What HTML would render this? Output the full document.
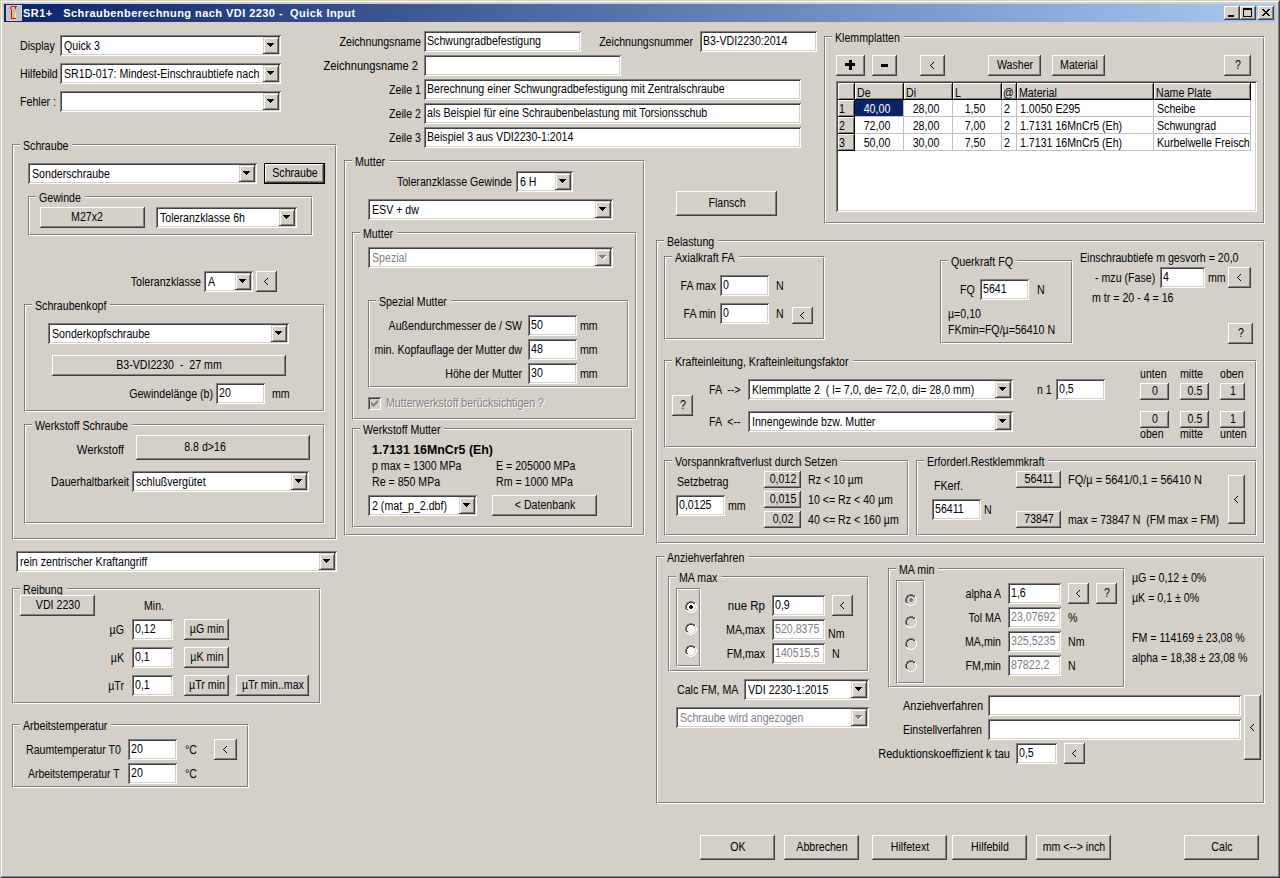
<!DOCTYPE html><html><head><meta charset="utf-8"><title>SR1+</title><style>
*{margin:0;padding:0}
html,body{width:1280px;height:878px;overflow:hidden;background:#D4D0C8}
body{position:relative;font-family:"Liberation Sans",sans-serif;font-size:12px;line-height:14px;color:#000}
div{position:absolute;box-sizing:border-box}
.t{white-space:pre;height:14px}
.clip{overflow:hidden}
.e{background:#fff;box-shadow:inset 1px 1px #808080,inset -1px -1px #fff,inset 2px 2px #404040,inset -2px -2px #D4D0C8;overflow:hidden}
.b{background:#D4D0C8;box-shadow:inset -1px -1px #404040,inset 1px 1px #fff,inset -2px -2px #808080;overflow:hidden}
.bd{background:#D4D0C8;border:1px solid #000;box-shadow:inset -1px -1px #404040,inset 1px 1px #fff,inset -2px -2px #808080;overflow:hidden}
.bd>.t{margin-left:-1px;margin-top:-1px}
.cb{background:#D4D0C8;box-shadow:inset -1px -1px #404040,inset 1px 1px #D4D0C8,inset 2px 2px #fff,inset -2px -2px #808080}
.arr{width:0;height:0;border-left:3.5px solid transparent;border-right:3.5px solid transparent;border-top:4px solid #000}
.g1{border:1px solid;border-color:#808080 #fff #fff #808080}
.g2{border:1px solid;border-color:#fff #808080 #808080 #fff}
.gt{background:#D4D0C8}
.rd{width:12px;height:12px;border-radius:6px;box-shadow:inset 1px 1px #808080,inset -1px -1px #fff,inset 2px 2px #404040,inset -2px -2px #D4D0C8}
.ck{width:13px;height:13px;box-shadow:inset 1px 1px #808080,inset -1px -1px #fff,inset 2px 2px #404040,inset -2px -2px #D4D0C8}
</style></head><body><div style="left:0;top:0;width:1280px;height:878px;border-top:1px solid #D4D0C8;border-left:1px solid #D4D0C8;border-right:1px solid #404040;border-bottom:1px solid #404040"></div>
<div style="left:1px;top:1px;width:1278px;height:876px;border-top:1px solid #fff;border-left:1px solid #fff;border-right:1px solid #808080;border-bottom:1px solid #808080"></div>
<div style="left:4px;top:4px;width:1272px;height:18px;background:linear-gradient(to right,#0A246A,#A6CAF0)"></div>
<div style="left:6px;top:5px;width:16px;height:16px"><svg width="16" height="16" style="position:absolute;left:0;top:0" shape-rendering="crispEdges"><rect x="0" y="0" width="16" height="16" fill="#D8D4CC"/><rect x="1" y="1" width="14" height="14" fill="#C0C0C0"/><rect x="5" y="1" width="6" height="1" fill="#f00"/><rect x="4" y="2" width="1" height="2" fill="#f00"/><rect x="9" y="2" width="1" height="2" fill="#f00"/><rect x="5" y="4" width="1" height="10" fill="#f00"/><rect x="5" y="13" width="5" height="1" fill="#f00"/><rect x="9" y="7" width="1" height="6" fill="#ff0"/></svg></div>
<div class="t" style="top:6px;left:23px;transform-origin:0 0;color:#fff;font-weight:bold;font-size:11px;letter-spacing:0.45px;">SR1+   Schraubenberechnung nach VDI 2230 -  Quick Input</div>
<div class="b" style="left:1224px;top:6px;width:16px;height:14px"><div style="left:4px;top:9px;width:6px;height:2px;background:#000"></div></div>
<div class="b" style="left:1240px;top:6px;width:16px;height:14px"><div style="left:3px;top:2px;width:9px;height:9px;border:1px solid #000;border-top-width:2px"></div></div>
<div class="b" style="left:1258px;top:6px;width:16px;height:14px"><svg width="16" height="14" style="position:absolute;left:0;top:0" shape-rendering="crispEdges"><rect x="4" y="3" width="1" height="1"/><rect x="5" y="3" width="1" height="1"/><rect x="10" y="3" width="1" height="1"/><rect x="11" y="3" width="1" height="1"/><rect x="5" y="4" width="1" height="1"/><rect x="6" y="4" width="1" height="1"/><rect x="9" y="4" width="1" height="1"/><rect x="10" y="4" width="1" height="1"/><rect x="6" y="5" width="1" height="1"/><rect x="7" y="5" width="1" height="1"/><rect x="8" y="5" width="1" height="1"/><rect x="9" y="5" width="1" height="1"/><rect x="7" y="6" width="1" height="1"/><rect x="8" y="6" width="1" height="1"/><rect x="6" y="7" width="1" height="1"/><rect x="7" y="7" width="1" height="1"/><rect x="8" y="7" width="1" height="1"/><rect x="9" y="7" width="1" height="1"/><rect x="5" y="8" width="1" height="1"/><rect x="6" y="8" width="1" height="1"/><rect x="9" y="8" width="1" height="1"/><rect x="10" y="8" width="1" height="1"/><rect x="4" y="9" width="1" height="1"/><rect x="5" y="9" width="1" height="1"/><rect x="10" y="9" width="1" height="1"/><rect x="11" y="9" width="1" height="1"/></svg></div>
<div class="t" style="top:39px;left:20px;transform-origin:0 0;transform:scaleX(0.885);">Display</div>
<div class="e" style="left:60px;top:35px;width:221px;height:21px;"><div class="clip" style="left:2px;top:2px;width:201px;height:17px"><div class="t" style="top:2px;left:2px;transform-origin:0 0;transform:scaleX(0.885);">Quick 3</div></div><div class="cb" style="left:203px;top:2px;width:16px;height:17px"><div style="left:4px;top:6px;width:7px;height:4px"><div style="left:0px;top:0px;width:7px;height:1px;background:#000"></div><div style="left:1px;top:1px;width:5px;height:1px;background:#000"></div><div style="left:2px;top:2px;width:3px;height:1px;background:#000"></div><div style="left:3px;top:3px;width:1px;height:1px;background:#000"></div></div></div></div>
<div class="t" style="top:67px;left:20px;transform-origin:0 0;transform:scaleX(0.885);">Hilfebild</div>
<div class="e" style="left:60px;top:63px;width:221px;height:21px;"><div class="clip" style="left:2px;top:2px;width:201px;height:17px"><div class="t" style="top:2px;left:2px;transform-origin:0 0;transform:scaleX(0.885);">SR1D-017: Mindest-Einschraubtiefe nach</div></div><div class="cb" style="left:203px;top:2px;width:16px;height:17px"><div style="left:4px;top:6px;width:7px;height:4px"><div style="left:0px;top:0px;width:7px;height:1px;background:#000"></div><div style="left:1px;top:1px;width:5px;height:1px;background:#000"></div><div style="left:2px;top:2px;width:3px;height:1px;background:#000"></div><div style="left:3px;top:3px;width:1px;height:1px;background:#000"></div></div></div></div>
<div class="t" style="top:95px;left:20px;transform-origin:0 0;transform:scaleX(0.885);">Fehler :</div>
<div class="e" style="left:60px;top:91px;width:221px;height:21px;"><div class="cb" style="left:203px;top:2px;width:16px;height:17px"><div style="left:4px;top:6px;width:7px;height:4px"><div style="left:0px;top:0px;width:7px;height:1px;background:#000"></div><div style="left:1px;top:1px;width:5px;height:1px;background:#000"></div><div style="left:2px;top:2px;width:3px;height:1px;background:#000"></div><div style="left:3px;top:3px;width:1px;height:1px;background:#000"></div></div></div></div>
<div class="g1" style="left:12px;top:144px;width:325px;height:396px"></div>
<div class="g2" style="left:13px;top:145px;width:323px;height:394px"></div>
<div class="gt" style="left:20px;top:141px;width:52px;height:9px"></div>
<div class="t" style="top:139px;left:23px;transform-origin:0 0;transform:scaleX(0.885);">Schraube</div>
<div class="e" style="left:28px;top:163px;width:229px;height:21px;"><div class="clip" style="left:2px;top:2px;width:209px;height:17px"><div class="t" style="top:2px;left:2px;transform-origin:0 0;transform:scaleX(0.885);">Sonderschraube</div></div><div class="cb" style="left:211px;top:2px;width:16px;height:17px"><div style="left:4px;top:6px;width:7px;height:4px"><div style="left:0px;top:0px;width:7px;height:1px;background:#000"></div><div style="left:1px;top:1px;width:5px;height:1px;background:#000"></div><div style="left:2px;top:2px;width:3px;height:1px;background:#000"></div><div style="left:3px;top:3px;width:1px;height:1px;background:#000"></div></div></div></div>
<div class="bd" style="left:264px;top:163px;width:61px;height:21px;"><div class="t" style="top:3px;left:-269.5px;width:600px;text-align:center;transform-origin:50% 0;transform:scaleX(0.885);">Schraube</div></div>
<div class="g1" style="left:28px;top:196px;width:285px;height:40px"></div>
<div class="g2" style="left:29px;top:197px;width:283px;height:38px"></div>
<div class="gt" style="left:36px;top:193px;width:49px;height:9px"></div>
<div class="t" style="top:191px;left:39px;transform-origin:0 0;transform:scaleX(0.885);">Gewinde</div>
<div class="b" style="left:40px;top:207px;width:105px;height:21px;"><div class="t" style="top:3px;left:-253.5px;width:600px;text-align:center;transform-origin:50% 0;transform:scaleX(0.885);">M27x2</div></div>
<div class="e" style="left:156px;top:207px;width:141px;height:21px;"><div class="clip" style="left:2px;top:2px;width:121px;height:17px"><div class="t" style="top:2px;left:2px;transform-origin:0 0;transform:scaleX(0.885);">Toleranzklasse 6h</div></div><div class="cb" style="left:123px;top:2px;width:16px;height:17px"><div style="left:4px;top:6px;width:7px;height:4px"><div style="left:0px;top:0px;width:7px;height:1px;background:#000"></div><div style="left:1px;top:1px;width:5px;height:1px;background:#000"></div><div style="left:2px;top:2px;width:3px;height:1px;background:#000"></div><div style="left:3px;top:3px;width:1px;height:1px;background:#000"></div></div></div></div>
<div class="t" style="top:275px;left:-399px;width:600px;text-align:right;transform-origin:100% 0;transform:scaleX(0.885);">Toleranzklasse</div>
<div class="e" style="left:204px;top:271px;width:49px;height:21px;"><div class="clip" style="left:2px;top:2px;width:29px;height:17px"><div class="t" style="top:2px;left:2px;transform-origin:0 0;transform:scaleX(0.885);">A</div></div><div class="cb" style="left:31px;top:2px;width:16px;height:17px"><div style="left:4px;top:6px;width:7px;height:4px"><div style="left:0px;top:0px;width:7px;height:1px;background:#000"></div><div style="left:1px;top:1px;width:5px;height:1px;background:#000"></div><div style="left:2px;top:2px;width:3px;height:1px;background:#000"></div><div style="left:3px;top:3px;width:1px;height:1px;background:#000"></div></div></div></div>
<div class="b" style="left:256px;top:271px;width:21px;height:21px;"><svg style="position:absolute;left:8px;top:7px" width="4" height="7" shape-rendering="crispEdges"><rect x="3" y="0" width="1" height="1"/><rect x="2" y="1" width="1" height="1"/><rect x="1" y="2" width="1" height="1"/><rect x="0" y="3" width="1" height="1"/><rect x="1" y="4" width="1" height="1"/><rect x="2" y="5" width="1" height="1"/><rect x="3" y="6" width="1" height="1"/></svg></div>
<div class="g1" style="left:24px;top:304px;width:301px;height:108px"></div>
<div class="g2" style="left:25px;top:305px;width:299px;height:106px"></div>
<div class="gt" style="left:32px;top:301px;width:78px;height:9px"></div>
<div class="t" style="top:299px;left:35px;transform-origin:0 0;transform:scaleX(0.885);">Schraubenkopf</div>
<div class="e" style="left:48px;top:323px;width:241px;height:21px;"><div class="clip" style="left:2px;top:2px;width:221px;height:17px"><div class="t" style="top:2px;left:2px;transform-origin:0 0;transform:scaleX(0.885);">Sonderkopfschraube</div></div><div class="cb" style="left:223px;top:2px;width:16px;height:17px"><div style="left:4px;top:6px;width:7px;height:4px"><div style="left:0px;top:0px;width:7px;height:1px;background:#000"></div><div style="left:1px;top:1px;width:5px;height:1px;background:#000"></div><div style="left:2px;top:2px;width:3px;height:1px;background:#000"></div><div style="left:3px;top:3px;width:1px;height:1px;background:#000"></div></div></div></div>
<div class="b" style="left:52px;top:355px;width:234px;height:21px;"><div class="t" style="top:3px;left:-183.0px;width:600px;text-align:center;transform-origin:50% 0;transform:scaleX(0.885);">B3-VDI2230  -  27 mm</div></div>
<div class="t" style="top:387px;left:-387px;width:600px;text-align:right;transform-origin:100% 0;transform:scaleX(0.885);">Gewindelänge (b)</div>
<div class="e" style="left:216px;top:383px;width:49px;height:21px;"><div class="t" style="top:3px;left:3px;transform-origin:0 0;transform:scaleX(0.885);">20</div></div>
<div class="t" style="top:387px;left:272px;transform-origin:0 0;transform:scaleX(0.885);">mm</div>
<div class="g1" style="left:24px;top:424px;width:301px;height:100px"></div>
<div class="g2" style="left:25px;top:425px;width:299px;height:98px"></div>
<div class="gt" style="left:32px;top:421px;width:100px;height:9px"></div>
<div class="t" style="top:419px;left:35px;transform-origin:0 0;transform:scaleX(0.885);">Werkstoff Schraube</div>
<div class="t" style="top:443px;left:-476px;width:600px;text-align:right;transform-origin:100% 0;transform:scaleX(0.94);">Werkstoff</div>
<div class="b" style="left:136px;top:435px;width:174px;height:25px;"><div class="t" style="top:5px;left:-231.0px;width:600px;text-align:center;transform-origin:50% 0;transform:scaleX(0.885);">8.8 d&gt;16</div></div>
<div class="t" style="top:475px;left:-471px;width:600px;text-align:right;transform-origin:100% 0;transform:scaleX(0.885);">Dauerhaltbarkeit</div>
<div class="e" style="left:132px;top:471px;width:177px;height:21px;"><div class="clip" style="left:2px;top:2px;width:157px;height:17px"><div class="t" style="top:2px;left:2px;transform-origin:0 0;transform:scaleX(0.885);">schlußvergütet</div></div><div class="cb" style="left:159px;top:2px;width:16px;height:17px"><div style="left:4px;top:6px;width:7px;height:4px"><div style="left:0px;top:0px;width:7px;height:1px;background:#000"></div><div style="left:1px;top:1px;width:5px;height:1px;background:#000"></div><div style="left:2px;top:2px;width:3px;height:1px;background:#000"></div><div style="left:3px;top:3px;width:1px;height:1px;background:#000"></div></div></div></div>
<div class="e" style="left:16px;top:551px;width:321px;height:21px;"><div class="clip" style="left:2px;top:2px;width:301px;height:17px"><div class="t" style="top:2px;left:2px;transform-origin:0 0;transform:scaleX(0.885);">rein zentrischer Kraftangriff</div></div><div class="cb" style="left:303px;top:2px;width:16px;height:17px"><div style="left:4px;top:6px;width:7px;height:4px"><div style="left:0px;top:0px;width:7px;height:1px;background:#000"></div><div style="left:1px;top:1px;width:5px;height:1px;background:#000"></div><div style="left:2px;top:2px;width:3px;height:1px;background:#000"></div><div style="left:3px;top:3px;width:1px;height:1px;background:#000"></div></div></div></div>
<div class="g1" style="left:12px;top:588px;width:309px;height:116px"></div>
<div class="g2" style="left:13px;top:589px;width:307px;height:114px"></div>
<div class="gt" style="left:20px;top:585px;width:47px;height:9px"></div>
<div class="t" style="top:583px;left:23px;transform-origin:0 0;transform:scaleX(0.885);">Reibung</div>
<div class="b" style="left:20px;top:595px;width:75px;height:21px;"><div class="t" style="top:3px;left:-262.5px;width:600px;text-align:center;transform-origin:50% 0;transform:scaleX(0.885);">VDI 2230</div></div>
<div class="t" style="top:599px;left:144px;transform-origin:0 0;transform:scaleX(0.885);">Min.</div>
<div class="t" style="top:623px;left:-476px;width:600px;text-align:right;transform-origin:100% 0;transform:scaleX(0.885);">µG</div>
<div class="t" style="top:651px;left:-476px;width:600px;text-align:right;transform-origin:100% 0;transform:scaleX(0.885);">µK</div>
<div class="t" style="top:679px;left:-476px;width:600px;text-align:right;transform-origin:100% 0;transform:scaleX(0.885);">µTr</div>
<div class="e" style="left:132px;top:619px;width:41px;height:21px;"><div class="t" style="top:3px;left:3px;transform-origin:0 0;transform:scaleX(0.885);">0,12</div></div>
<div class="e" style="left:132px;top:647px;width:41px;height:21px;"><div class="t" style="top:3px;left:3px;transform-origin:0 0;transform:scaleX(0.885);">0,1</div></div>
<div class="e" style="left:132px;top:675px;width:41px;height:21px;"><div class="t" style="top:3px;left:3px;transform-origin:0 0;transform:scaleX(0.885);">0,1</div></div>
<div class="b" style="left:184px;top:619px;width:45px;height:21px;"><div class="t" style="top:3px;left:-277.5px;width:600px;text-align:center;transform-origin:50% 0;transform:scaleX(0.885);">µG min</div></div>
<div class="b" style="left:184px;top:647px;width:45px;height:21px;"><div class="t" style="top:3px;left:-277.5px;width:600px;text-align:center;transform-origin:50% 0;transform:scaleX(0.885);">µK min</div></div>
<div class="b" style="left:184px;top:675px;width:45px;height:21px;"><div class="t" style="top:3px;left:-277.5px;width:600px;text-align:center;transform-origin:50% 0;transform:scaleX(0.885);">µTr min</div></div>
<div class="b" style="left:236px;top:675px;width:73px;height:21px;"><div class="t" style="top:3px;left:-263.5px;width:600px;text-align:center;transform-origin:50% 0;transform:scaleX(0.885);">µTr min..max</div></div>
<div class="g1" style="left:12px;top:724px;width:237px;height:64px"></div>
<div class="g2" style="left:13px;top:725px;width:235px;height:62px"></div>
<div class="gt" style="left:20px;top:721px;width:91px;height:9px"></div>
<div class="t" style="top:719px;left:23px;transform-origin:0 0;transform:scaleX(0.885);">Arbeitstemperatur</div>
<div class="t" style="top:743px;left:26px;transform-origin:0 0;transform:scaleX(0.885);">Raumtemperatur T0</div>
<div class="e" style="left:128px;top:739px;width:49px;height:21px;"><div class="t" style="top:3px;left:3px;transform-origin:0 0;transform:scaleX(0.885);">20</div></div>
<div class="t" style="top:743px;left:185px;transform-origin:0 0;transform:scaleX(0.885);">°C</div>
<div class="b" style="left:214px;top:739px;width:23px;height:21px;"><svg style="position:absolute;left:9px;top:7px" width="4" height="7" shape-rendering="crispEdges"><rect x="3" y="0" width="1" height="1"/><rect x="2" y="1" width="1" height="1"/><rect x="1" y="2" width="1" height="1"/><rect x="0" y="3" width="1" height="1"/><rect x="1" y="4" width="1" height="1"/><rect x="2" y="5" width="1" height="1"/><rect x="3" y="6" width="1" height="1"/></svg></div>
<div class="t" style="top:767px;left:28px;transform-origin:0 0;transform:scaleX(0.865);">Arbeitstemperatur T</div>
<div class="e" style="left:128px;top:763px;width:49px;height:21px;"><div class="t" style="top:3px;left:3px;transform-origin:0 0;transform:scaleX(0.885);">20</div></div>
<div class="t" style="top:767px;left:185px;transform-origin:0 0;transform:scaleX(0.885);">°C</div>
<div class="t" style="top:35px;left:-179px;width:600px;text-align:right;transform-origin:100% 0;transform:scaleX(0.885);">Zeichnungsname</div>
<div class="e" style="left:424px;top:31px;width:157px;height:21px;"><div class="t" style="top:3px;left:3px;transform-origin:0 0;transform:scaleX(0.885);">Schwungradbefestigung</div></div>
<div class="t" style="top:35px;left:93px;width:600px;text-align:right;transform-origin:100% 0;transform:scaleX(0.885);">Zeichnungsnummer</div>
<div class="e" style="left:700px;top:31px;width:117px;height:21px;"><div class="t" style="top:3px;left:3px;transform-origin:0 0;transform:scaleX(0.885);">B3-VDI2230:2014</div></div>
<div class="t" style="top:59px;left:-182px;width:600px;text-align:right;transform-origin:100% 0;transform:scaleX(0.925);">Zeichnungsname 2</div>
<div class="e" style="left:424px;top:55px;width:197px;height:21px;"></div>
<div class="t" style="top:83px;left:-179px;width:600px;text-align:right;transform-origin:100% 0;transform:scaleX(0.885);">Zeile 1</div>
<div class="e" style="left:424px;top:79px;width:377px;height:21px;"><div class="t" style="top:3px;left:3px;transform-origin:0 0;transform:scaleX(0.885);">Berechnung einer Schwungradbefestigung mit Zentralschraube</div></div>
<div class="t" style="top:107px;left:-179px;width:600px;text-align:right;transform-origin:100% 0;transform:scaleX(0.885);">Zeile 2</div>
<div class="e" style="left:424px;top:103px;width:377px;height:21px;"><div class="t" style="top:3px;left:3px;transform-origin:0 0;transform:scaleX(0.885);">als Beispiel für eine Schraubenbelastung mit Torsionsschub</div></div>
<div class="t" style="top:131px;left:-179px;width:600px;text-align:right;transform-origin:100% 0;transform:scaleX(0.885);">Zeile 3</div>
<div class="e" style="left:424px;top:127px;width:377px;height:21px;"><div class="t" style="top:3px;left:3px;transform-origin:0 0;transform:scaleX(0.885);">Beispiel 3 aus VDI2230-1:2014</div></div>
<div class="g1" style="left:344px;top:160px;width:301px;height:376px"></div>
<div class="g2" style="left:345px;top:161px;width:299px;height:374px"></div>
<div class="gt" style="left:352px;top:157px;width:37px;height:9px"></div>
<div class="t" style="top:155px;left:355px;transform-origin:0 0;transform:scaleX(0.885);">Mutter</div>
<div class="t" style="top:175px;left:-88px;width:600px;text-align:right;transform-origin:100% 0;transform:scaleX(0.885);">Toleranzklasse Gewinde</div>
<div class="e" style="left:516px;top:171px;width:57px;height:21px;"><div class="clip" style="left:2px;top:2px;width:37px;height:17px"><div class="t" style="top:2px;left:2px;transform-origin:0 0;transform:scaleX(0.885);">6 H</div></div><div class="cb" style="left:39px;top:2px;width:16px;height:17px"><div style="left:4px;top:6px;width:7px;height:4px"><div style="left:0px;top:0px;width:7px;height:1px;background:#000"></div><div style="left:1px;top:1px;width:5px;height:1px;background:#000"></div><div style="left:2px;top:2px;width:3px;height:1px;background:#000"></div><div style="left:3px;top:3px;width:1px;height:1px;background:#000"></div></div></div></div>
<div class="e" style="left:368px;top:199px;width:245px;height:21px;"><div class="clip" style="left:2px;top:2px;width:225px;height:17px"><div class="t" style="top:2px;left:2px;transform-origin:0 0;transform:scaleX(0.885);">ESV + dw</div></div><div class="cb" style="left:227px;top:2px;width:16px;height:17px"><div style="left:4px;top:6px;width:7px;height:4px"><div style="left:0px;top:0px;width:7px;height:1px;background:#000"></div><div style="left:1px;top:1px;width:5px;height:1px;background:#000"></div><div style="left:2px;top:2px;width:3px;height:1px;background:#000"></div><div style="left:3px;top:3px;width:1px;height:1px;background:#000"></div></div></div></div>
<div class="g1" style="left:352px;top:232px;width:285px;height:188px"></div>
<div class="g2" style="left:353px;top:233px;width:283px;height:186px"></div>
<div class="gt" style="left:360px;top:229px;width:37px;height:9px"></div>
<div class="t" style="top:227px;left:363px;transform-origin:0 0;transform:scaleX(0.885);">Mutter</div>
<div class="e" style="left:368px;top:247px;width:245px;height:21px;"><div class="clip" style="left:2px;top:2px;width:225px;height:17px"><div class="t" style="top:2px;left:2px;transform-origin:0 0;transform:scaleX(0.885);color:#808080;">Spezial</div></div><div class="cb" style="left:227px;top:2px;width:16px;height:17px"><div style="left:5px;top:7px;width:7px;height:4px"><div style="left:0px;top:0px;width:7px;height:1px;background:#fff"></div><div style="left:1px;top:1px;width:5px;height:1px;background:#fff"></div><div style="left:2px;top:2px;width:3px;height:1px;background:#fff"></div><div style="left:3px;top:3px;width:1px;height:1px;background:#fff"></div></div><div style="left:4px;top:6px;width:7px;height:4px"><div style="left:0px;top:0px;width:7px;height:1px;background:#808080"></div><div style="left:1px;top:1px;width:5px;height:1px;background:#808080"></div><div style="left:2px;top:2px;width:3px;height:1px;background:#808080"></div><div style="left:3px;top:3px;width:1px;height:1px;background:#808080"></div></div></div></div>
<div class="g1" style="left:368px;top:300px;width:261px;height:88px"></div>
<div class="g2" style="left:369px;top:301px;width:259px;height:86px"></div>
<div class="gt" style="left:376px;top:297px;width:75px;height:9px"></div>
<div class="t" style="top:295px;left:379px;transform-origin:0 0;transform:scaleX(0.885);">Spezial Mutter</div>
<div class="t" style="top:319px;left:-78px;width:600px;text-align:right;transform-origin:100% 0;transform:scaleX(0.885);">Außendurchmesser de / SW</div>
<div class="t" style="top:343px;left:-78px;width:600px;text-align:right;transform-origin:100% 0;transform:scaleX(0.885);">min. Kopfauflage der Mutter dw</div>
<div class="t" style="top:367px;left:-78px;width:600px;text-align:right;transform-origin:100% 0;transform:scaleX(0.885);">Höhe der Mutter</div>
<div class="e" style="left:528px;top:315px;width:49px;height:21px;"><div class="t" style="top:3px;left:3px;transform-origin:0 0;transform:scaleX(0.885);">50</div></div>
<div class="e" style="left:528px;top:339px;width:49px;height:21px;"><div class="t" style="top:3px;left:3px;transform-origin:0 0;transform:scaleX(0.885);">48</div></div>
<div class="e" style="left:528px;top:363px;width:49px;height:21px;"><div class="t" style="top:3px;left:3px;transform-origin:0 0;transform:scaleX(0.885);">30</div></div>
<div class="t" style="top:319px;left:580px;transform-origin:0 0;transform:scaleX(0.885);">mm</div>
<div class="t" style="top:343px;left:580px;transform-origin:0 0;transform:scaleX(0.885);">mm</div>
<div class="t" style="top:367px;left:580px;transform-origin:0 0;transform:scaleX(0.885);">mm</div>
<div class="ck" style="left:368px;top:397px;background:#D4D0C8"><svg style="position:absolute;left:0;top:0" width="13" height="13" shape-rendering="crispEdges"><rect x="9" y="3" width="1" height="1" fill="#808080"/><rect x="8" y="4" width="1" height="1" fill="#808080"/><rect x="9" y="4" width="1" height="1" fill="#808080"/><rect x="3" y="5" width="1" height="1" fill="#808080"/><rect x="7" y="5" width="1" height="1" fill="#808080"/><rect x="8" y="5" width="1" height="1" fill="#808080"/><rect x="9" y="5" width="1" height="1" fill="#808080"/><rect x="3" y="6" width="1" height="1" fill="#808080"/><rect x="4" y="6" width="1" height="1" fill="#808080"/><rect x="6" y="6" width="1" height="1" fill="#808080"/><rect x="7" y="6" width="1" height="1" fill="#808080"/><rect x="8" y="6" width="1" height="1" fill="#808080"/><rect x="3" y="7" width="1" height="1" fill="#808080"/><rect x="4" y="7" width="1" height="1" fill="#808080"/><rect x="5" y="7" width="1" height="1" fill="#808080"/><rect x="6" y="7" width="1" height="1" fill="#808080"/><rect x="7" y="7" width="1" height="1" fill="#808080"/><rect x="4" y="8" width="1" height="1" fill="#808080"/><rect x="5" y="8" width="1" height="1" fill="#808080"/><rect x="6" y="8" width="1" height="1" fill="#808080"/><rect x="5" y="9" width="1" height="1" fill="#808080"/></svg></div>
<div class="t" style="top:397px;left:387px;transform-origin:0 0;transform:scaleX(0.885);color:#fff;">Mutterwerkstoff berücksichtigen ?</div>
<div class="t" style="top:396px;left:386px;transform-origin:0 0;transform:scaleX(0.885);color:#808080;">Mutterwerkstoff berücksichtigen ?</div>
<div class="g1" style="left:352px;top:428px;width:281px;height:100px"></div>
<div class="g2" style="left:353px;top:429px;width:279px;height:98px"></div>
<div class="gt" style="left:360px;top:425px;width:84px;height:9px"></div>
<div class="t" style="top:423px;left:363px;transform-origin:0 0;transform:scaleX(0.885);">Werkstoff Mutter</div>
<div class="t" style="top:443px;left:372px;transform-origin:0 0;transform:scaleX(1.03);font-weight:bold;">1.7131 16MnCr5 (Eh)</div>
<div class="t" style="top:459px;left:372px;transform-origin:0 0;transform:scaleX(0.885);">p max = 1300 MPa</div>
<div class="t" style="top:475px;left:372px;transform-origin:0 0;transform:scaleX(0.885);">Re = 850 MPa</div>
<div class="t" style="top:459px;left:496px;transform-origin:0 0;transform:scaleX(0.885);">E = 205000 MPa</div>
<div class="t" style="top:475px;left:496px;transform-origin:0 0;transform:scaleX(0.885);">Rm = 1000 MPa</div>
<div class="e" style="left:368px;top:495px;width:109px;height:21px;"><div class="clip" style="left:2px;top:2px;width:89px;height:17px"><div class="t" style="top:2px;left:2px;transform-origin:0 0;transform:scaleX(0.885);">2 (mat_p_2.dbf)</div></div><div class="cb" style="left:91px;top:2px;width:16px;height:17px"><div style="left:4px;top:6px;width:7px;height:4px"><div style="left:0px;top:0px;width:7px;height:1px;background:#000"></div><div style="left:1px;top:1px;width:5px;height:1px;background:#000"></div><div style="left:2px;top:2px;width:3px;height:1px;background:#000"></div><div style="left:3px;top:3px;width:1px;height:1px;background:#000"></div></div></div></div>
<div class="b" style="left:492px;top:495px;width:105px;height:21px;"><div class="t" style="top:3px;left:-247.5px;width:600px;text-align:center;transform-origin:50% 0;transform:scaleX(0.885);">&lt; Datenbank</div></div>
<div class="b" style="left:676px;top:191px;width:101px;height:25px;"><div class="t" style="top:5px;left:-249.5px;width:600px;text-align:center;transform-origin:50% 0;transform:scaleX(0.885);">Flansch</div></div>
<div class="g1" style="left:824px;top:36px;width:441px;height:188px"></div>
<div class="g2" style="left:825px;top:37px;width:439px;height:186px"></div>
<div class="gt" style="left:832px;top:33px;width:72px;height:9px"></div>
<div class="t" style="top:31px;left:835px;transform-origin:0 0;transform:scaleX(0.885);">Klemmplatten</div>
<div class="b" style="left:836px;top:55px;width:29px;height:21px;"></div>
<div style="left:845px;top:63px;width:10px;height:3px;background:#000"></div><div style="left:849px;top:60px;width:3px;height:10px;background:#000"></div>
<div class="b" style="left:872px;top:55px;width:25px;height:21px;"></div>
<div style="left:881px;top:64px;width:7px;height:3px;background:#000"></div>
<div class="b" style="left:920px;top:55px;width:25px;height:21px;"><svg style="position:absolute;left:10px;top:7px" width="4" height="7" shape-rendering="crispEdges"><rect x="3" y="0" width="1" height="1"/><rect x="2" y="1" width="1" height="1"/><rect x="1" y="2" width="1" height="1"/><rect x="0" y="3" width="1" height="1"/><rect x="1" y="4" width="1" height="1"/><rect x="2" y="5" width="1" height="1"/><rect x="3" y="6" width="1" height="1"/></svg></div>
<div class="b" style="left:988px;top:55px;width:53px;height:21px;"><div class="t" style="top:3px;left:-273.5px;width:600px;text-align:center;transform-origin:50% 0;transform:scaleX(0.885);">Washer</div></div>
<div class="b" style="left:1052px;top:55px;width:53px;height:21px;"><div class="t" style="top:3px;left:-273.5px;width:600px;text-align:center;transform-origin:50% 0;transform:scaleX(0.885);">Material</div></div>
<div class="b" style="left:1224px;top:55px;width:27px;height:21px;"><div class="t" style="top:3px;left:-286.5px;width:600px;text-align:center;transform-origin:50% 0;transform:scaleX(0.885);">?</div></div>
<div style="left:836px;top:81px;width:421px;height:131px;background:#fff;box-shadow:inset 1px 1px #808080,inset -1px -1px #fff,inset 2px 2px #404040,inset -2px -2px #D4D0C8"></div><div style="left:838px;top:83px;width:17px;height:17px;background:#D4D0C8;overflow:hidden;box-shadow:inset -1px -1px #000,inset 1px 1px #fff,inset -2px -2px #808080"></div><div style="left:855px;top:83px;width:49px;height:17px;background:#D4D0C8;overflow:hidden;box-shadow:inset -1px -1px #000,inset 1px 1px #fff,inset -2px -2px #808080"><div class="t" style="top:3px;left:2px;transform-origin:0 0;transform:scaleX(0.885);">De</div></div><div style="left:904px;top:83px;width:49px;height:17px;background:#D4D0C8;overflow:hidden;box-shadow:inset -1px -1px #000,inset 1px 1px #fff,inset -2px -2px #808080"><div class="t" style="top:3px;left:2px;transform-origin:0 0;transform:scaleX(0.885);">Di</div></div><div style="left:953px;top:83px;width:49px;height:17px;background:#D4D0C8;overflow:hidden;box-shadow:inset -1px -1px #000,inset 1px 1px #fff,inset -2px -2px #808080"><div class="t" style="top:3px;left:2px;transform-origin:0 0;transform:scaleX(0.885);">L</div></div><div style="left:1002px;top:83px;width:15px;height:17px;background:#D4D0C8;overflow:hidden;box-shadow:inset -1px -1px #000,inset 1px 1px #fff,inset -2px -2px #808080"><div class="t" style="top:3px;left:1px;transform-origin:0 0;transform:scaleX(0.885);">@</div></div><div style="left:1017px;top:83px;width:137px;height:17px;background:#D4D0C8;overflow:hidden;box-shadow:inset -1px -1px #000,inset 1px 1px #fff,inset -2px -2px #808080"><div class="t" style="top:3px;left:2px;transform-origin:0 0;transform:scaleX(0.885);">Material</div></div><div style="left:1154px;top:83px;width:97px;height:17px;background:#D4D0C8;overflow:hidden;box-shadow:inset -1px -1px #000,inset 1px 1px #fff,inset -2px -2px #808080"><div class="t" style="top:3px;left:2px;transform-origin:0 0;transform:scaleX(0.885);">Name Plate</div></div><div style="left:838px;top:100px;width:17px;height:17px;background:#D4D0C8;overflow:hidden;box-shadow:inset -1px -1px #000,inset 1px 1px #fff,inset -2px -2px #808080"><div class="t" style="top:2px;left:1px;transform-origin:0 0;transform:scaleX(0.885);">1</div></div><div style="left:855px;top:100px;width:49px;height:17px;background:#C0C0C0;overflow:hidden"><div style="left:0;top:0;width:48px;height:16px;background:#0A246A;overflow:hidden"><div class="t" style="top:2px;left:-278.5px;width:600px;text-align:center;transform-origin:50% 0;transform:scaleX(0.885);color:#fff;">40,00</div></div></div><div style="left:904px;top:100px;width:49px;height:17px;background:#C0C0C0;overflow:hidden"><div style="left:0;top:0;width:48px;height:16px;background:#fff;overflow:hidden"><div class="t" style="top:2px;left:-278.5px;width:600px;text-align:center;transform-origin:50% 0;transform:scaleX(0.885);color:#000;">28,00</div></div></div><div style="left:953px;top:100px;width:49px;height:17px;background:#C0C0C0;overflow:hidden"><div style="left:0;top:0;width:48px;height:16px;background:#fff;overflow:hidden"><div class="t" style="top:2px;left:-278.5px;width:600px;text-align:center;transform-origin:50% 0;transform:scaleX(0.885);color:#000;">1,50</div></div></div><div style="left:1002px;top:100px;width:15px;height:17px;background:#C0C0C0;overflow:hidden"><div style="left:0;top:0;width:14px;height:16px;background:#fff;overflow:hidden"><div class="t" style="top:2px;left:2px;transform-origin:0 0;transform:scaleX(0.885);color:#000;">2</div></div></div><div style="left:1017px;top:100px;width:137px;height:17px;background:#C0C0C0;overflow:hidden"><div style="left:0;top:0;width:136px;height:16px;background:#fff;overflow:hidden"><div class="t" style="top:2px;left:3px;transform-origin:0 0;transform:scaleX(0.885);color:#000;">1.0050 E295</div></div></div><div style="left:1154px;top:100px;width:97px;height:17px;background:#C0C0C0;overflow:hidden"><div style="left:0;top:0;width:96px;height:16px;background:#fff;overflow:hidden"><div class="t" style="top:2px;left:3px;transform-origin:0 0;transform:scaleX(0.885);color:#000;">Scheibe</div></div></div><div style="left:838px;top:117px;width:17px;height:17px;background:#D4D0C8;overflow:hidden;box-shadow:inset -1px -1px #000,inset 1px 1px #fff,inset -2px -2px #808080"><div class="t" style="top:2px;left:1px;transform-origin:0 0;transform:scaleX(0.885);">2</div></div><div style="left:855px;top:117px;width:49px;height:17px;background:#C0C0C0;overflow:hidden"><div style="left:0;top:0;width:48px;height:16px;background:#fff;overflow:hidden"><div class="t" style="top:2px;left:-278.5px;width:600px;text-align:center;transform-origin:50% 0;transform:scaleX(0.885);color:#000;">72,00</div></div></div><div style="left:904px;top:117px;width:49px;height:17px;background:#C0C0C0;overflow:hidden"><div style="left:0;top:0;width:48px;height:16px;background:#fff;overflow:hidden"><div class="t" style="top:2px;left:-278.5px;width:600px;text-align:center;transform-origin:50% 0;transform:scaleX(0.885);color:#000;">28,00</div></div></div><div style="left:953px;top:117px;width:49px;height:17px;background:#C0C0C0;overflow:hidden"><div style="left:0;top:0;width:48px;height:16px;background:#fff;overflow:hidden"><div class="t" style="top:2px;left:-278.5px;width:600px;text-align:center;transform-origin:50% 0;transform:scaleX(0.885);color:#000;">7,00</div></div></div><div style="left:1002px;top:117px;width:15px;height:17px;background:#C0C0C0;overflow:hidden"><div style="left:0;top:0;width:14px;height:16px;background:#fff;overflow:hidden"><div class="t" style="top:2px;left:2px;transform-origin:0 0;transform:scaleX(0.885);color:#000;">2</div></div></div><div style="left:1017px;top:117px;width:137px;height:17px;background:#C0C0C0;overflow:hidden"><div style="left:0;top:0;width:136px;height:16px;background:#fff;overflow:hidden"><div class="t" style="top:2px;left:3px;transform-origin:0 0;transform:scaleX(0.885);color:#000;">1.7131 16MnCr5 (Eh)</div></div></div><div style="left:1154px;top:117px;width:97px;height:17px;background:#C0C0C0;overflow:hidden"><div style="left:0;top:0;width:96px;height:16px;background:#fff;overflow:hidden"><div class="t" style="top:2px;left:3px;transform-origin:0 0;transform:scaleX(0.885);color:#000;">Schwungrad</div></div></div><div style="left:838px;top:134px;width:17px;height:17px;background:#D4D0C8;overflow:hidden;box-shadow:inset -1px -1px #000,inset 1px 1px #fff,inset -2px -2px #808080"><div class="t" style="top:2px;left:1px;transform-origin:0 0;transform:scaleX(0.885);">3</div></div><div style="left:855px;top:134px;width:49px;height:17px;background:#C0C0C0;overflow:hidden"><div style="left:0;top:0;width:48px;height:16px;background:#fff;overflow:hidden"><div class="t" style="top:2px;left:-278.5px;width:600px;text-align:center;transform-origin:50% 0;transform:scaleX(0.885);color:#000;">50,00</div></div></div><div style="left:904px;top:134px;width:49px;height:17px;background:#C0C0C0;overflow:hidden"><div style="left:0;top:0;width:48px;height:16px;background:#fff;overflow:hidden"><div class="t" style="top:2px;left:-278.5px;width:600px;text-align:center;transform-origin:50% 0;transform:scaleX(0.885);color:#000;">30,00</div></div></div><div style="left:953px;top:134px;width:49px;height:17px;background:#C0C0C0;overflow:hidden"><div style="left:0;top:0;width:48px;height:16px;background:#fff;overflow:hidden"><div class="t" style="top:2px;left:-278.5px;width:600px;text-align:center;transform-origin:50% 0;transform:scaleX(0.885);color:#000;">7,50</div></div></div><div style="left:1002px;top:134px;width:15px;height:17px;background:#C0C0C0;overflow:hidden"><div style="left:0;top:0;width:14px;height:16px;background:#fff;overflow:hidden"><div class="t" style="top:2px;left:2px;transform-origin:0 0;transform:scaleX(0.885);color:#000;">2</div></div></div><div style="left:1017px;top:134px;width:137px;height:17px;background:#C0C0C0;overflow:hidden"><div style="left:0;top:0;width:136px;height:16px;background:#fff;overflow:hidden"><div class="t" style="top:2px;left:3px;transform-origin:0 0;transform:scaleX(0.885);color:#000;">1.7131 16MnCr5 (Eh)</div></div></div><div style="left:1154px;top:134px;width:97px;height:17px;background:#C0C0C0;overflow:hidden"><div style="left:0;top:0;width:96px;height:16px;background:#fff;overflow:hidden"><div class="t" style="top:2px;left:3px;transform-origin:0 0;transform:scaleX(0.885);color:#000;">Kurbelwelle Freischraube</div></div></div>
<div class="g1" style="left:656px;top:240px;width:609px;height:304px"></div>
<div class="g2" style="left:657px;top:241px;width:607px;height:302px"></div>
<div class="gt" style="left:664px;top:237px;width:54px;height:9px"></div>
<div class="t" style="top:235px;left:667px;transform-origin:0 0;transform:scaleX(0.885);">Belastung</div>
<div class="g1" style="left:664px;top:256px;width:161px;height:84px"></div>
<div class="g2" style="left:665px;top:257px;width:159px;height:82px"></div>
<div class="gt" style="left:672px;top:253px;width:67px;height:9px"></div>
<div class="t" style="top:251px;left:675px;transform-origin:0 0;transform:scaleX(0.885);">Axialkraft FA</div>
<div class="t" style="top:279px;left:116px;width:600px;text-align:right;transform-origin:100% 0;transform:scaleX(0.885);">FA max</div>
<div class="e" style="left:720px;top:275px;width:49px;height:21px;"><div class="t" style="top:3px;left:3px;transform-origin:0 0;transform:scaleX(0.885);">0</div></div>
<div class="t" style="top:279px;left:776px;transform-origin:0 0;transform:scaleX(0.885);">N</div>
<div class="t" style="top:307px;left:116px;width:600px;text-align:right;transform-origin:100% 0;transform:scaleX(0.885);">FA min</div>
<div class="e" style="left:720px;top:303px;width:49px;height:21px;"><div class="t" style="top:3px;left:3px;transform-origin:0 0;transform:scaleX(0.885);">0</div></div>
<div class="t" style="top:307px;left:776px;transform-origin:0 0;transform:scaleX(0.885);">N</div>
<div class="b" style="left:792px;top:307px;width:21px;height:17px;"><svg style="position:absolute;left:8px;top:5px" width="4" height="7" shape-rendering="crispEdges"><rect x="3" y="0" width="1" height="1"/><rect x="2" y="1" width="1" height="1"/><rect x="1" y="2" width="1" height="1"/><rect x="0" y="3" width="1" height="1"/><rect x="1" y="4" width="1" height="1"/><rect x="2" y="5" width="1" height="1"/><rect x="3" y="6" width="1" height="1"/></svg></div>
<div class="g1" style="left:940px;top:260px;width:133px;height:84px"></div>
<div class="g2" style="left:941px;top:261px;width:131px;height:82px"></div>
<div class="gt" style="left:948px;top:257px;width:69px;height:9px"></div>
<div class="t" style="top:255px;left:951px;transform-origin:0 0;transform:scaleX(0.885);">Querkraft FQ</div>
<div class="t" style="top:283px;left:960px;transform-origin:0 0;transform:scaleX(0.885);">FQ</div>
<div class="e" style="left:980px;top:279px;width:49px;height:21px;"><div class="t" style="top:3px;left:3px;transform-origin:0 0;transform:scaleX(0.885);">5641</div></div>
<div class="t" style="top:283px;left:1037px;transform-origin:0 0;transform:scaleX(0.885);">N</div>
<div class="t" style="top:307px;left:948px;transform-origin:0 0;transform:scaleX(0.885);">µ=0,10</div>
<div class="t" style="top:323px;left:948px;transform-origin:0 0;transform:scaleX(0.885);">FKmin=FQ/µ=56410 N</div>
<div class="t" style="top:251px;left:1080px;transform-origin:0 0;transform:scaleX(0.885);">Einschraubtiefe m gesvorh = 20,0</div>
<div class="t" style="top:271px;left:1095px;transform-origin:0 0;transform:scaleX(0.885);">- mzu (Fase)</div>
<div class="e" style="left:1160px;top:267px;width:45px;height:21px;"><div class="t" style="top:3px;left:3px;transform-origin:0 0;transform:scaleX(0.885);">4</div></div>
<div class="t" style="top:271px;left:1208px;transform-origin:0 0;transform:scaleX(0.885);">mm</div>
<div class="b" style="left:1228px;top:267px;width:23px;height:21px;"><svg style="position:absolute;left:9px;top:7px" width="4" height="7" shape-rendering="crispEdges"><rect x="3" y="0" width="1" height="1"/><rect x="2" y="1" width="1" height="1"/><rect x="1" y="2" width="1" height="1"/><rect x="0" y="3" width="1" height="1"/><rect x="1" y="4" width="1" height="1"/><rect x="2" y="5" width="1" height="1"/><rect x="3" y="6" width="1" height="1"/></svg></div>
<div class="t" style="top:291px;left:1092px;transform-origin:0 0;transform:scaleX(0.885);">m tr = 20 - 4 = 16</div>
<div class="b" style="left:1228px;top:323px;width:25px;height:21px;"><div class="t" style="top:3px;left:-287.5px;width:600px;text-align:center;transform-origin:50% 0;transform:scaleX(0.885);">?</div></div>
<div class="g1" style="left:664px;top:360px;width:593px;height:88px"></div>
<div class="g2" style="left:665px;top:361px;width:591px;height:86px"></div>
<div class="gt" style="left:672px;top:357px;width:181px;height:9px"></div>
<div class="t" style="top:355px;left:675px;transform-origin:0 0;transform:scaleX(0.885);">Krafteinleitung, Krafteinleitungsfaktor</div>
<div class="b" style="left:672px;top:395px;width:21px;height:21px;"><div class="t" style="top:3px;left:-289.5px;width:600px;text-align:center;transform-origin:50% 0;transform:scaleX(0.885);">?</div></div>
<div class="t" style="top:383px;left:709px;transform-origin:0 0;transform:scaleX(0.885);">FA  --&gt;</div>
<div class="e" style="left:748px;top:379px;width:265px;height:21px;"><div class="clip" style="left:2px;top:2px;width:245px;height:17px"><div class="t" style="top:2px;left:2px;transform-origin:0 0;transform:scaleX(0.885);">Klemmplatte 2  ( l= 7,0, de= 72,0, di= 28,0 mm)</div></div><div class="cb" style="left:247px;top:2px;width:16px;height:17px"><div style="left:4px;top:6px;width:7px;height:4px"><div style="left:0px;top:0px;width:7px;height:1px;background:#000"></div><div style="left:1px;top:1px;width:5px;height:1px;background:#000"></div><div style="left:2px;top:2px;width:3px;height:1px;background:#000"></div><div style="left:3px;top:3px;width:1px;height:1px;background:#000"></div></div></div></div>
<div class="t" style="top:415px;left:709px;transform-origin:0 0;transform:scaleX(0.885);">FA  &lt;--</div>
<div class="e" style="left:748px;top:411px;width:265px;height:21px;"><div class="clip" style="left:2px;top:2px;width:245px;height:17px"><div class="t" style="top:2px;left:2px;transform-origin:0 0;transform:scaleX(0.885);">Innengewinde bzw. Mutter</div></div><div class="cb" style="left:247px;top:2px;width:16px;height:17px"><div style="left:4px;top:6px;width:7px;height:4px"><div style="left:0px;top:0px;width:7px;height:1px;background:#000"></div><div style="left:1px;top:1px;width:5px;height:1px;background:#000"></div><div style="left:2px;top:2px;width:3px;height:1px;background:#000"></div><div style="left:3px;top:3px;width:1px;height:1px;background:#000"></div></div></div></div>
<div class="t" style="top:383px;left:1037px;transform-origin:0 0;transform:scaleX(0.885);">n 1</div>
<div class="e" style="left:1056px;top:379px;width:49px;height:21px;"><div class="t" style="top:3px;left:3px;transform-origin:0 0;transform:scaleX(0.885);">0,5</div></div>
<div class="t" style="top:367px;left:1140px;transform-origin:0 0;transform:scaleX(0.885);">unten</div>
<div class="t" style="top:367px;left:1180px;transform-origin:0 0;transform:scaleX(0.885);">mitte</div>
<div class="t" style="top:367px;left:1220px;transform-origin:0 0;transform:scaleX(0.885);">oben</div>
<div class="b" style="left:1140px;top:383px;width:29px;height:17px;"><div class="t" style="top:1px;left:-285.5px;width:600px;text-align:center;transform-origin:50% 0;transform:scaleX(0.885);">0</div></div>
<div class="b" style="left:1180px;top:383px;width:29px;height:17px;"><div class="t" style="top:1px;left:-285.5px;width:600px;text-align:center;transform-origin:50% 0;transform:scaleX(0.885);">0.5</div></div>
<div class="b" style="left:1220px;top:383px;width:25px;height:17px;"><div class="t" style="top:1px;left:-287.5px;width:600px;text-align:center;transform-origin:50% 0;transform:scaleX(0.885);">1</div></div>
<div class="b" style="left:1140px;top:411px;width:29px;height:17px;"><div class="t" style="top:1px;left:-285.5px;width:600px;text-align:center;transform-origin:50% 0;transform:scaleX(0.885);">0</div></div>
<div class="b" style="left:1180px;top:411px;width:29px;height:17px;"><div class="t" style="top:1px;left:-285.5px;width:600px;text-align:center;transform-origin:50% 0;transform:scaleX(0.885);">0.5</div></div>
<div class="b" style="left:1220px;top:411px;width:25px;height:17px;"><div class="t" style="top:1px;left:-287.5px;width:600px;text-align:center;transform-origin:50% 0;transform:scaleX(0.885);">1</div></div>
<div class="t" style="top:427px;left:1140px;transform-origin:0 0;transform:scaleX(0.885);">oben</div>
<div class="t" style="top:427px;left:1180px;transform-origin:0 0;transform:scaleX(0.885);">mitte</div>
<div class="t" style="top:427px;left:1220px;transform-origin:0 0;transform:scaleX(0.885);">unten</div>
<div class="g1" style="left:664px;top:460px;width:245px;height:76px"></div>
<div class="g2" style="left:665px;top:461px;width:243px;height:74px"></div>
<div class="gt" style="left:672px;top:457px;width:169px;height:9px"></div>
<div class="t" style="top:455px;left:675px;transform-origin:0 0;transform:scaleX(0.885);">Vorspannkraftverlust durch Setzen</div>
<div class="t" style="top:475px;left:677px;transform-origin:0 0;transform:scaleX(0.885);">Setzbetrag</div>
<div class="e" style="left:676px;top:495px;width:49px;height:21px;"><div class="t" style="top:3px;left:3px;transform-origin:0 0;transform:scaleX(0.885);">0,0125</div></div>
<div class="t" style="top:499px;left:728px;transform-origin:0 0;transform:scaleX(0.885);">mm</div>
<div class="b" style="left:764px;top:471px;width:37px;height:17px;"><div class="t" style="top:1px;left:-281.5px;width:600px;text-align:center;transform-origin:50% 0;transform:scaleX(0.885);">0,012</div></div>
<div class="b" style="left:764px;top:491px;width:37px;height:17px;"><div class="t" style="top:1px;left:-281.5px;width:600px;text-align:center;transform-origin:50% 0;transform:scaleX(0.885);">0,015</div></div>
<div class="b" style="left:764px;top:511px;width:37px;height:17px;"><div class="t" style="top:1px;left:-281.5px;width:600px;text-align:center;transform-origin:50% 0;transform:scaleX(0.885);">0,02</div></div>
<div class="t" style="top:473px;left:808px;transform-origin:0 0;transform:scaleX(0.885);">Rz &lt; 10 µm</div>
<div class="t" style="top:493px;left:808px;transform-origin:0 0;transform:scaleX(0.885);">10 &lt;= Rz &lt; 40 µm</div>
<div class="t" style="top:513px;left:808px;transform-origin:0 0;transform:scaleX(0.885);">40 &lt;= Rz &lt; 160 µm</div>
<div class="g1" style="left:916px;top:460px;width:341px;height:76px"></div>
<div class="g2" style="left:917px;top:461px;width:339px;height:74px"></div>
<div class="gt" style="left:924px;top:457px;width:124px;height:9px"></div>
<div class="t" style="top:455px;left:927px;transform-origin:0 0;transform:scaleX(0.885);">Erforderl.Restklemmkraft</div>
<div class="t" style="top:479px;left:934px;transform-origin:0 0;transform:scaleX(0.885);">FKerf.</div>
<div class="e" style="left:932px;top:499px;width:49px;height:21px;"><div class="t" style="top:3px;left:3px;transform-origin:0 0;transform:scaleX(0.885);">56411</div></div>
<div class="t" style="top:503px;left:984px;transform-origin:0 0;transform:scaleX(0.885);">N</div>
<div class="b" style="left:1016px;top:471px;width:45px;height:17px;"><div class="t" style="top:1px;left:-277.5px;width:600px;text-align:center;transform-origin:50% 0;transform:scaleX(0.885);">56411</div></div>
<div class="b" style="left:1016px;top:511px;width:45px;height:17px;"><div class="t" style="top:1px;left:-277.5px;width:600px;text-align:center;transform-origin:50% 0;transform:scaleX(0.885);">73847</div></div>
<div class="t" style="top:473px;left:1068px;transform-origin:0 0;transform:scaleX(0.915);">FQ/µ = 5641/0,1 = 56410 N</div>
<div class="t" style="top:513px;left:1068px;transform-origin:0 0;transform:scaleX(0.885);">max = 73847 N  (FM max = FM)</div>
<div class="b" style="left:1228px;top:475px;width:17px;height:49px;"><svg style="position:absolute;left:6px;top:21px" width="4" height="7" shape-rendering="crispEdges"><rect x="3" y="0" width="1" height="1"/><rect x="2" y="1" width="1" height="1"/><rect x="1" y="2" width="1" height="1"/><rect x="0" y="3" width="1" height="1"/><rect x="1" y="4" width="1" height="1"/><rect x="2" y="5" width="1" height="1"/><rect x="3" y="6" width="1" height="1"/></svg></div>
<div class="g1" style="left:656px;top:556px;width:609px;height:248px"></div>
<div class="g2" style="left:657px;top:557px;width:607px;height:246px"></div>
<div class="gt" style="left:664px;top:553px;width:84px;height:9px"></div>
<div class="t" style="top:551px;left:667px;transform-origin:0 0;transform:scaleX(0.885);">Anziehverfahren</div>
<div class="g1" style="left:668px;top:576px;width:201px;height:96px"></div>
<div class="g2" style="left:669px;top:577px;width:199px;height:94px"></div>
<div class="gt" style="left:676px;top:573px;width:45px;height:9px"></div>
<div class="t" style="top:571px;left:679px;transform-origin:0 0;transform:scaleX(0.885);">MA max</div>
<div class="g1" style="left:676px;top:588px;width:25px;height:79px"></div>
<div class="g2" style="left:677px;top:589px;width:23px;height:77px"></div>
<svg style="position:absolute;left:685px;top:601px" width="12" height="12" shape-rendering="crispEdges"><rect x="4" y="0" width="4" height="1" fill="#808080"/><rect x="2" y="1" width="2" height="1" fill="#808080"/><rect x="4" y="1" width="4" height="1" fill="#404040"/><rect x="8" y="1" width="2" height="1" fill="#808080"/><rect x="1" y="2" width="1" height="1" fill="#808080"/><rect x="2" y="2" width="2" height="1" fill="#404040"/><rect x="4" y="2" width="4" height="1" fill="#fff"/><rect x="8" y="2" width="2" height="1" fill="#404040"/><rect x="10" y="2" width="1" height="1" fill="#fff"/><rect x="1" y="3" width="1" height="1" fill="#808080"/><rect x="2" y="3" width="1" height="1" fill="#404040"/><rect x="3" y="3" width="6" height="1" fill="#fff"/><rect x="9" y="3" width="1" height="1" fill="#D4D0C8"/><rect x="10" y="3" width="1" height="1" fill="#fff"/><rect x="0" y="4" width="1" height="1" fill="#808080"/><rect x="1" y="4" width="1" height="1" fill="#404040"/><rect x="2" y="4" width="8" height="1" fill="#fff"/><rect x="10" y="4" width="1" height="1" fill="#D4D0C8"/><rect x="11" y="4" width="1" height="1" fill="#fff"/><rect x="0" y="5" width="1" height="1" fill="#808080"/><rect x="1" y="5" width="1" height="1" fill="#404040"/><rect x="2" y="5" width="8" height="1" fill="#fff"/><rect x="10" y="5" width="1" height="1" fill="#D4D0C8"/><rect x="11" y="5" width="1" height="1" fill="#fff"/><rect x="0" y="6" width="1" height="1" fill="#808080"/><rect x="1" y="6" width="1" height="1" fill="#404040"/><rect x="2" y="6" width="8" height="1" fill="#fff"/><rect x="10" y="6" width="1" height="1" fill="#D4D0C8"/><rect x="11" y="6" width="1" height="1" fill="#fff"/><rect x="0" y="7" width="1" height="1" fill="#808080"/><rect x="1" y="7" width="1" height="1" fill="#404040"/><rect x="2" y="7" width="8" height="1" fill="#fff"/><rect x="10" y="7" width="1" height="1" fill="#D4D0C8"/><rect x="11" y="7" width="1" height="1" fill="#fff"/><rect x="1" y="8" width="1" height="1" fill="#808080"/><rect x="2" y="8" width="1" height="1" fill="#404040"/><rect x="3" y="8" width="6" height="1" fill="#fff"/><rect x="9" y="8" width="1" height="1" fill="#D4D0C8"/><rect x="10" y="8" width="1" height="1" fill="#fff"/><rect x="1" y="9" width="1" height="1" fill="#fff"/><rect x="2" y="9" width="2" height="1" fill="#D4D0C8"/><rect x="4" y="9" width="4" height="1" fill="#fff"/><rect x="8" y="9" width="2" height="1" fill="#D4D0C8"/><rect x="10" y="9" width="1" height="1" fill="#fff"/><rect x="2" y="10" width="2" height="1" fill="#fff"/><rect x="4" y="10" width="4" height="1" fill="#D4D0C8"/><rect x="8" y="10" width="2" height="1" fill="#fff"/><rect x="4" y="11" width="4" height="1" fill="#fff"/><rect x="5" y="4" width="2" height="1" fill="#000"/><rect x="4" y="5" width="4" height="1" fill="#000"/><rect x="4" y="6" width="4" height="1" fill="#000"/><rect x="5" y="7" width="2" height="1" fill="#000"/></svg>
<svg style="position:absolute;left:685px;top:623px" width="12" height="12" shape-rendering="crispEdges"><rect x="4" y="0" width="4" height="1" fill="#808080"/><rect x="2" y="1" width="2" height="1" fill="#808080"/><rect x="4" y="1" width="4" height="1" fill="#404040"/><rect x="8" y="1" width="2" height="1" fill="#808080"/><rect x="1" y="2" width="1" height="1" fill="#808080"/><rect x="2" y="2" width="2" height="1" fill="#404040"/><rect x="4" y="2" width="4" height="1" fill="#fff"/><rect x="8" y="2" width="2" height="1" fill="#404040"/><rect x="10" y="2" width="1" height="1" fill="#fff"/><rect x="1" y="3" width="1" height="1" fill="#808080"/><rect x="2" y="3" width="1" height="1" fill="#404040"/><rect x="3" y="3" width="6" height="1" fill="#fff"/><rect x="9" y="3" width="1" height="1" fill="#D4D0C8"/><rect x="10" y="3" width="1" height="1" fill="#fff"/><rect x="0" y="4" width="1" height="1" fill="#808080"/><rect x="1" y="4" width="1" height="1" fill="#404040"/><rect x="2" y="4" width="8" height="1" fill="#fff"/><rect x="10" y="4" width="1" height="1" fill="#D4D0C8"/><rect x="11" y="4" width="1" height="1" fill="#fff"/><rect x="0" y="5" width="1" height="1" fill="#808080"/><rect x="1" y="5" width="1" height="1" fill="#404040"/><rect x="2" y="5" width="8" height="1" fill="#fff"/><rect x="10" y="5" width="1" height="1" fill="#D4D0C8"/><rect x="11" y="5" width="1" height="1" fill="#fff"/><rect x="0" y="6" width="1" height="1" fill="#808080"/><rect x="1" y="6" width="1" height="1" fill="#404040"/><rect x="2" y="6" width="8" height="1" fill="#fff"/><rect x="10" y="6" width="1" height="1" fill="#D4D0C8"/><rect x="11" y="6" width="1" height="1" fill="#fff"/><rect x="0" y="7" width="1" height="1" fill="#808080"/><rect x="1" y="7" width="1" height="1" fill="#404040"/><rect x="2" y="7" width="8" height="1" fill="#fff"/><rect x="10" y="7" width="1" height="1" fill="#D4D0C8"/><rect x="11" y="7" width="1" height="1" fill="#fff"/><rect x="1" y="8" width="1" height="1" fill="#808080"/><rect x="2" y="8" width="1" height="1" fill="#404040"/><rect x="3" y="8" width="6" height="1" fill="#fff"/><rect x="9" y="8" width="1" height="1" fill="#D4D0C8"/><rect x="10" y="8" width="1" height="1" fill="#fff"/><rect x="1" y="9" width="1" height="1" fill="#fff"/><rect x="2" y="9" width="2" height="1" fill="#D4D0C8"/><rect x="4" y="9" width="4" height="1" fill="#fff"/><rect x="8" y="9" width="2" height="1" fill="#D4D0C8"/><rect x="10" y="9" width="1" height="1" fill="#fff"/><rect x="2" y="10" width="2" height="1" fill="#fff"/><rect x="4" y="10" width="4" height="1" fill="#D4D0C8"/><rect x="8" y="10" width="2" height="1" fill="#fff"/><rect x="4" y="11" width="4" height="1" fill="#fff"/></svg>
<svg style="position:absolute;left:685px;top:645px" width="12" height="12" shape-rendering="crispEdges"><rect x="4" y="0" width="4" height="1" fill="#808080"/><rect x="2" y="1" width="2" height="1" fill="#808080"/><rect x="4" y="1" width="4" height="1" fill="#404040"/><rect x="8" y="1" width="2" height="1" fill="#808080"/><rect x="1" y="2" width="1" height="1" fill="#808080"/><rect x="2" y="2" width="2" height="1" fill="#404040"/><rect x="4" y="2" width="4" height="1" fill="#fff"/><rect x="8" y="2" width="2" height="1" fill="#404040"/><rect x="10" y="2" width="1" height="1" fill="#fff"/><rect x="1" y="3" width="1" height="1" fill="#808080"/><rect x="2" y="3" width="1" height="1" fill="#404040"/><rect x="3" y="3" width="6" height="1" fill="#fff"/><rect x="9" y="3" width="1" height="1" fill="#D4D0C8"/><rect x="10" y="3" width="1" height="1" fill="#fff"/><rect x="0" y="4" width="1" height="1" fill="#808080"/><rect x="1" y="4" width="1" height="1" fill="#404040"/><rect x="2" y="4" width="8" height="1" fill="#fff"/><rect x="10" y="4" width="1" height="1" fill="#D4D0C8"/><rect x="11" y="4" width="1" height="1" fill="#fff"/><rect x="0" y="5" width="1" height="1" fill="#808080"/><rect x="1" y="5" width="1" height="1" fill="#404040"/><rect x="2" y="5" width="8" height="1" fill="#fff"/><rect x="10" y="5" width="1" height="1" fill="#D4D0C8"/><rect x="11" y="5" width="1" height="1" fill="#fff"/><rect x="0" y="6" width="1" height="1" fill="#808080"/><rect x="1" y="6" width="1" height="1" fill="#404040"/><rect x="2" y="6" width="8" height="1" fill="#fff"/><rect x="10" y="6" width="1" height="1" fill="#D4D0C8"/><rect x="11" y="6" width="1" height="1" fill="#fff"/><rect x="0" y="7" width="1" height="1" fill="#808080"/><rect x="1" y="7" width="1" height="1" fill="#404040"/><rect x="2" y="7" width="8" height="1" fill="#fff"/><rect x="10" y="7" width="1" height="1" fill="#D4D0C8"/><rect x="11" y="7" width="1" height="1" fill="#fff"/><rect x="1" y="8" width="1" height="1" fill="#808080"/><rect x="2" y="8" width="1" height="1" fill="#404040"/><rect x="3" y="8" width="6" height="1" fill="#fff"/><rect x="9" y="8" width="1" height="1" fill="#D4D0C8"/><rect x="10" y="8" width="1" height="1" fill="#fff"/><rect x="1" y="9" width="1" height="1" fill="#fff"/><rect x="2" y="9" width="2" height="1" fill="#D4D0C8"/><rect x="4" y="9" width="4" height="1" fill="#fff"/><rect x="8" y="9" width="2" height="1" fill="#D4D0C8"/><rect x="10" y="9" width="1" height="1" fill="#fff"/><rect x="2" y="10" width="2" height="1" fill="#fff"/><rect x="4" y="10" width="4" height="1" fill="#D4D0C8"/><rect x="8" y="10" width="2" height="1" fill="#fff"/><rect x="4" y="11" width="4" height="1" fill="#fff"/></svg>
<div class="t" style="top:599px;left:165px;width:600px;text-align:right;transform-origin:100% 0;transform:scaleX(0.96);">nue Rp</div>
<div class="e" style="left:772px;top:595px;width:53px;height:21px;"><div class="t" style="top:3px;left:3px;transform-origin:0 0;transform:scaleX(0.885);">0,9</div></div>
<div class="b" style="left:832px;top:595px;width:21px;height:21px;"><svg style="position:absolute;left:8px;top:7px" width="4" height="7" shape-rendering="crispEdges"><rect x="3" y="0" width="1" height="1"/><rect x="2" y="1" width="1" height="1"/><rect x="1" y="2" width="1" height="1"/><rect x="0" y="3" width="1" height="1"/><rect x="1" y="4" width="1" height="1"/><rect x="2" y="5" width="1" height="1"/><rect x="3" y="6" width="1" height="1"/></svg></div>
<div class="t" style="top:623px;left:165px;width:600px;text-align:right;transform-origin:100% 0;transform:scaleX(0.885);">MA,max</div>
<div class="e" style="left:772px;top:619px;width:53px;height:21px;"><div class="t" style="top:3px;left:3px;transform-origin:0 0;transform:scaleX(0.885);color:#808080;">520,8375</div></div>
<div class="t" style="top:627px;left:828px;transform-origin:0 0;transform:scaleX(0.885);">Nm</div>
<div class="t" style="top:647px;left:165px;width:600px;text-align:right;transform-origin:100% 0;transform:scaleX(0.885);">FM,max</div>
<div class="e" style="left:772px;top:643px;width:53px;height:21px;"><div class="t" style="top:3px;left:3px;transform-origin:0 0;transform:scaleX(0.885);color:#808080;">140515,5</div></div>
<div class="t" style="top:647px;left:832px;transform-origin:0 0;transform:scaleX(0.885);">N</div>
<div class="t" style="top:683px;left:677px;transform-origin:0 0;transform:scaleX(0.885);">Calc FM, MA</div>
<div class="e" style="left:744px;top:679px;width:125px;height:21px;"><div class="clip" style="left:2px;top:2px;width:105px;height:17px"><div class="t" style="top:2px;left:2px;transform-origin:0 0;transform:scaleX(0.885);">VDI 2230-1:2015</div></div><div class="cb" style="left:107px;top:2px;width:16px;height:17px"><div style="left:4px;top:6px;width:7px;height:4px"><div style="left:0px;top:0px;width:7px;height:1px;background:#000"></div><div style="left:1px;top:1px;width:5px;height:1px;background:#000"></div><div style="left:2px;top:2px;width:3px;height:1px;background:#000"></div><div style="left:3px;top:3px;width:1px;height:1px;background:#000"></div></div></div></div>
<div class="e" style="left:676px;top:707px;width:193px;height:21px;"><div class="clip" style="left:2px;top:2px;width:173px;height:17px"><div class="t" style="top:2px;left:2px;transform-origin:0 0;transform:scaleX(0.885);color:#808080;">Schraube wird angezogen</div></div><div class="cb" style="left:175px;top:2px;width:16px;height:17px"><div style="left:5px;top:7px;width:7px;height:4px"><div style="left:0px;top:0px;width:7px;height:1px;background:#fff"></div><div style="left:1px;top:1px;width:5px;height:1px;background:#fff"></div><div style="left:2px;top:2px;width:3px;height:1px;background:#fff"></div><div style="left:3px;top:3px;width:1px;height:1px;background:#fff"></div></div><div style="left:4px;top:6px;width:7px;height:4px"><div style="left:0px;top:0px;width:7px;height:1px;background:#808080"></div><div style="left:1px;top:1px;width:5px;height:1px;background:#808080"></div><div style="left:2px;top:2px;width:3px;height:1px;background:#808080"></div><div style="left:3px;top:3px;width:1px;height:1px;background:#808080"></div></div></div></div>
<div class="g1" style="left:888px;top:568px;width:237px;height:120px"></div>
<div class="g2" style="left:889px;top:569px;width:235px;height:118px"></div>
<div class="gt" style="left:896px;top:565px;width:42px;height:9px"></div>
<div class="t" style="top:563px;left:899px;transform-origin:0 0;transform:scaleX(0.885);">MA min</div>
<div class="g1" style="left:896px;top:580px;width:29px;height:104px"></div>
<div class="g2" style="left:897px;top:581px;width:27px;height:102px"></div>
<svg style="position:absolute;left:905px;top:594px" width="12" height="12" shape-rendering="crispEdges"><rect x="4" y="0" width="4" height="1" fill="#808080"/><rect x="2" y="1" width="2" height="1" fill="#808080"/><rect x="4" y="1" width="4" height="1" fill="#404040"/><rect x="8" y="1" width="2" height="1" fill="#808080"/><rect x="1" y="2" width="1" height="1" fill="#808080"/><rect x="2" y="2" width="2" height="1" fill="#404040"/><rect x="4" y="2" width="4" height="1" fill="#D4D0C8"/><rect x="8" y="2" width="2" height="1" fill="#404040"/><rect x="10" y="2" width="1" height="1" fill="#fff"/><rect x="1" y="3" width="1" height="1" fill="#808080"/><rect x="2" y="3" width="1" height="1" fill="#404040"/><rect x="3" y="3" width="6" height="1" fill="#D4D0C8"/><rect x="9" y="3" width="1" height="1" fill="#D4D0C8"/><rect x="10" y="3" width="1" height="1" fill="#fff"/><rect x="0" y="4" width="1" height="1" fill="#808080"/><rect x="1" y="4" width="1" height="1" fill="#404040"/><rect x="2" y="4" width="8" height="1" fill="#D4D0C8"/><rect x="10" y="4" width="1" height="1" fill="#D4D0C8"/><rect x="11" y="4" width="1" height="1" fill="#fff"/><rect x="0" y="5" width="1" height="1" fill="#808080"/><rect x="1" y="5" width="1" height="1" fill="#404040"/><rect x="2" y="5" width="8" height="1" fill="#D4D0C8"/><rect x="10" y="5" width="1" height="1" fill="#D4D0C8"/><rect x="11" y="5" width="1" height="1" fill="#fff"/><rect x="0" y="6" width="1" height="1" fill="#808080"/><rect x="1" y="6" width="1" height="1" fill="#404040"/><rect x="2" y="6" width="8" height="1" fill="#D4D0C8"/><rect x="10" y="6" width="1" height="1" fill="#D4D0C8"/><rect x="11" y="6" width="1" height="1" fill="#fff"/><rect x="0" y="7" width="1" height="1" fill="#808080"/><rect x="1" y="7" width="1" height="1" fill="#404040"/><rect x="2" y="7" width="8" height="1" fill="#D4D0C8"/><rect x="10" y="7" width="1" height="1" fill="#D4D0C8"/><rect x="11" y="7" width="1" height="1" fill="#fff"/><rect x="1" y="8" width="1" height="1" fill="#808080"/><rect x="2" y="8" width="1" height="1" fill="#404040"/><rect x="3" y="8" width="6" height="1" fill="#D4D0C8"/><rect x="9" y="8" width="1" height="1" fill="#D4D0C8"/><rect x="10" y="8" width="1" height="1" fill="#fff"/><rect x="1" y="9" width="1" height="1" fill="#fff"/><rect x="2" y="9" width="2" height="1" fill="#D4D0C8"/><rect x="4" y="9" width="4" height="1" fill="#D4D0C8"/><rect x="8" y="9" width="2" height="1" fill="#D4D0C8"/><rect x="10" y="9" width="1" height="1" fill="#fff"/><rect x="2" y="10" width="2" height="1" fill="#fff"/><rect x="4" y="10" width="4" height="1" fill="#D4D0C8"/><rect x="8" y="10" width="2" height="1" fill="#fff"/><rect x="4" y="11" width="4" height="1" fill="#fff"/><rect x="5" y="4" width="2" height="1" fill="#808080"/><rect x="4" y="5" width="4" height="1" fill="#808080"/><rect x="4" y="6" width="4" height="1" fill="#808080"/><rect x="5" y="7" width="2" height="1" fill="#808080"/></svg>
<svg style="position:absolute;left:905px;top:616px" width="12" height="12" shape-rendering="crispEdges"><rect x="4" y="0" width="4" height="1" fill="#808080"/><rect x="2" y="1" width="2" height="1" fill="#808080"/><rect x="4" y="1" width="4" height="1" fill="#404040"/><rect x="8" y="1" width="2" height="1" fill="#808080"/><rect x="1" y="2" width="1" height="1" fill="#808080"/><rect x="2" y="2" width="2" height="1" fill="#404040"/><rect x="4" y="2" width="4" height="1" fill="#D4D0C8"/><rect x="8" y="2" width="2" height="1" fill="#404040"/><rect x="10" y="2" width="1" height="1" fill="#fff"/><rect x="1" y="3" width="1" height="1" fill="#808080"/><rect x="2" y="3" width="1" height="1" fill="#404040"/><rect x="3" y="3" width="6" height="1" fill="#D4D0C8"/><rect x="9" y="3" width="1" height="1" fill="#D4D0C8"/><rect x="10" y="3" width="1" height="1" fill="#fff"/><rect x="0" y="4" width="1" height="1" fill="#808080"/><rect x="1" y="4" width="1" height="1" fill="#404040"/><rect x="2" y="4" width="8" height="1" fill="#D4D0C8"/><rect x="10" y="4" width="1" height="1" fill="#D4D0C8"/><rect x="11" y="4" width="1" height="1" fill="#fff"/><rect x="0" y="5" width="1" height="1" fill="#808080"/><rect x="1" y="5" width="1" height="1" fill="#404040"/><rect x="2" y="5" width="8" height="1" fill="#D4D0C8"/><rect x="10" y="5" width="1" height="1" fill="#D4D0C8"/><rect x="11" y="5" width="1" height="1" fill="#fff"/><rect x="0" y="6" width="1" height="1" fill="#808080"/><rect x="1" y="6" width="1" height="1" fill="#404040"/><rect x="2" y="6" width="8" height="1" fill="#D4D0C8"/><rect x="10" y="6" width="1" height="1" fill="#D4D0C8"/><rect x="11" y="6" width="1" height="1" fill="#fff"/><rect x="0" y="7" width="1" height="1" fill="#808080"/><rect x="1" y="7" width="1" height="1" fill="#404040"/><rect x="2" y="7" width="8" height="1" fill="#D4D0C8"/><rect x="10" y="7" width="1" height="1" fill="#D4D0C8"/><rect x="11" y="7" width="1" height="1" fill="#fff"/><rect x="1" y="8" width="1" height="1" fill="#808080"/><rect x="2" y="8" width="1" height="1" fill="#404040"/><rect x="3" y="8" width="6" height="1" fill="#D4D0C8"/><rect x="9" y="8" width="1" height="1" fill="#D4D0C8"/><rect x="10" y="8" width="1" height="1" fill="#fff"/><rect x="1" y="9" width="1" height="1" fill="#fff"/><rect x="2" y="9" width="2" height="1" fill="#D4D0C8"/><rect x="4" y="9" width="4" height="1" fill="#D4D0C8"/><rect x="8" y="9" width="2" height="1" fill="#D4D0C8"/><rect x="10" y="9" width="1" height="1" fill="#fff"/><rect x="2" y="10" width="2" height="1" fill="#fff"/><rect x="4" y="10" width="4" height="1" fill="#D4D0C8"/><rect x="8" y="10" width="2" height="1" fill="#fff"/><rect x="4" y="11" width="4" height="1" fill="#fff"/></svg>
<svg style="position:absolute;left:905px;top:638px" width="12" height="12" shape-rendering="crispEdges"><rect x="4" y="0" width="4" height="1" fill="#808080"/><rect x="2" y="1" width="2" height="1" fill="#808080"/><rect x="4" y="1" width="4" height="1" fill="#404040"/><rect x="8" y="1" width="2" height="1" fill="#808080"/><rect x="1" y="2" width="1" height="1" fill="#808080"/><rect x="2" y="2" width="2" height="1" fill="#404040"/><rect x="4" y="2" width="4" height="1" fill="#D4D0C8"/><rect x="8" y="2" width="2" height="1" fill="#404040"/><rect x="10" y="2" width="1" height="1" fill="#fff"/><rect x="1" y="3" width="1" height="1" fill="#808080"/><rect x="2" y="3" width="1" height="1" fill="#404040"/><rect x="3" y="3" width="6" height="1" fill="#D4D0C8"/><rect x="9" y="3" width="1" height="1" fill="#D4D0C8"/><rect x="10" y="3" width="1" height="1" fill="#fff"/><rect x="0" y="4" width="1" height="1" fill="#808080"/><rect x="1" y="4" width="1" height="1" fill="#404040"/><rect x="2" y="4" width="8" height="1" fill="#D4D0C8"/><rect x="10" y="4" width="1" height="1" fill="#D4D0C8"/><rect x="11" y="4" width="1" height="1" fill="#fff"/><rect x="0" y="5" width="1" height="1" fill="#808080"/><rect x="1" y="5" width="1" height="1" fill="#404040"/><rect x="2" y="5" width="8" height="1" fill="#D4D0C8"/><rect x="10" y="5" width="1" height="1" fill="#D4D0C8"/><rect x="11" y="5" width="1" height="1" fill="#fff"/><rect x="0" y="6" width="1" height="1" fill="#808080"/><rect x="1" y="6" width="1" height="1" fill="#404040"/><rect x="2" y="6" width="8" height="1" fill="#D4D0C8"/><rect x="10" y="6" width="1" height="1" fill="#D4D0C8"/><rect x="11" y="6" width="1" height="1" fill="#fff"/><rect x="0" y="7" width="1" height="1" fill="#808080"/><rect x="1" y="7" width="1" height="1" fill="#404040"/><rect x="2" y="7" width="8" height="1" fill="#D4D0C8"/><rect x="10" y="7" width="1" height="1" fill="#D4D0C8"/><rect x="11" y="7" width="1" height="1" fill="#fff"/><rect x="1" y="8" width="1" height="1" fill="#808080"/><rect x="2" y="8" width="1" height="1" fill="#404040"/><rect x="3" y="8" width="6" height="1" fill="#D4D0C8"/><rect x="9" y="8" width="1" height="1" fill="#D4D0C8"/><rect x="10" y="8" width="1" height="1" fill="#fff"/><rect x="1" y="9" width="1" height="1" fill="#fff"/><rect x="2" y="9" width="2" height="1" fill="#D4D0C8"/><rect x="4" y="9" width="4" height="1" fill="#D4D0C8"/><rect x="8" y="9" width="2" height="1" fill="#D4D0C8"/><rect x="10" y="9" width="1" height="1" fill="#fff"/><rect x="2" y="10" width="2" height="1" fill="#fff"/><rect x="4" y="10" width="4" height="1" fill="#D4D0C8"/><rect x="8" y="10" width="2" height="1" fill="#fff"/><rect x="4" y="11" width="4" height="1" fill="#fff"/></svg>
<svg style="position:absolute;left:905px;top:660px" width="12" height="12" shape-rendering="crispEdges"><rect x="4" y="0" width="4" height="1" fill="#808080"/><rect x="2" y="1" width="2" height="1" fill="#808080"/><rect x="4" y="1" width="4" height="1" fill="#404040"/><rect x="8" y="1" width="2" height="1" fill="#808080"/><rect x="1" y="2" width="1" height="1" fill="#808080"/><rect x="2" y="2" width="2" height="1" fill="#404040"/><rect x="4" y="2" width="4" height="1" fill="#D4D0C8"/><rect x="8" y="2" width="2" height="1" fill="#404040"/><rect x="10" y="2" width="1" height="1" fill="#fff"/><rect x="1" y="3" width="1" height="1" fill="#808080"/><rect x="2" y="3" width="1" height="1" fill="#404040"/><rect x="3" y="3" width="6" height="1" fill="#D4D0C8"/><rect x="9" y="3" width="1" height="1" fill="#D4D0C8"/><rect x="10" y="3" width="1" height="1" fill="#fff"/><rect x="0" y="4" width="1" height="1" fill="#808080"/><rect x="1" y="4" width="1" height="1" fill="#404040"/><rect x="2" y="4" width="8" height="1" fill="#D4D0C8"/><rect x="10" y="4" width="1" height="1" fill="#D4D0C8"/><rect x="11" y="4" width="1" height="1" fill="#fff"/><rect x="0" y="5" width="1" height="1" fill="#808080"/><rect x="1" y="5" width="1" height="1" fill="#404040"/><rect x="2" y="5" width="8" height="1" fill="#D4D0C8"/><rect x="10" y="5" width="1" height="1" fill="#D4D0C8"/><rect x="11" y="5" width="1" height="1" fill="#fff"/><rect x="0" y="6" width="1" height="1" fill="#808080"/><rect x="1" y="6" width="1" height="1" fill="#404040"/><rect x="2" y="6" width="8" height="1" fill="#D4D0C8"/><rect x="10" y="6" width="1" height="1" fill="#D4D0C8"/><rect x="11" y="6" width="1" height="1" fill="#fff"/><rect x="0" y="7" width="1" height="1" fill="#808080"/><rect x="1" y="7" width="1" height="1" fill="#404040"/><rect x="2" y="7" width="8" height="1" fill="#D4D0C8"/><rect x="10" y="7" width="1" height="1" fill="#D4D0C8"/><rect x="11" y="7" width="1" height="1" fill="#fff"/><rect x="1" y="8" width="1" height="1" fill="#808080"/><rect x="2" y="8" width="1" height="1" fill="#404040"/><rect x="3" y="8" width="6" height="1" fill="#D4D0C8"/><rect x="9" y="8" width="1" height="1" fill="#D4D0C8"/><rect x="10" y="8" width="1" height="1" fill="#fff"/><rect x="1" y="9" width="1" height="1" fill="#fff"/><rect x="2" y="9" width="2" height="1" fill="#D4D0C8"/><rect x="4" y="9" width="4" height="1" fill="#D4D0C8"/><rect x="8" y="9" width="2" height="1" fill="#D4D0C8"/><rect x="10" y="9" width="1" height="1" fill="#fff"/><rect x="2" y="10" width="2" height="1" fill="#fff"/><rect x="4" y="10" width="4" height="1" fill="#D4D0C8"/><rect x="8" y="10" width="2" height="1" fill="#fff"/><rect x="4" y="11" width="4" height="1" fill="#fff"/></svg>
<div class="t" style="top:587px;left:401px;width:600px;text-align:right;transform-origin:100% 0;transform:scaleX(0.885);">alpha A</div>
<div class="e" style="left:1008px;top:583px;width:53px;height:21px;"><div class="t" style="top:3px;left:3px;transform-origin:0 0;transform:scaleX(0.885);">1,6</div></div>
<div class="b" style="left:1068px;top:583px;width:21px;height:21px;"><svg style="position:absolute;left:8px;top:7px" width="4" height="7" shape-rendering="crispEdges"><rect x="3" y="0" width="1" height="1"/><rect x="2" y="1" width="1" height="1"/><rect x="1" y="2" width="1" height="1"/><rect x="0" y="3" width="1" height="1"/><rect x="1" y="4" width="1" height="1"/><rect x="2" y="5" width="1" height="1"/><rect x="3" y="6" width="1" height="1"/></svg></div>
<div class="b" style="left:1096px;top:583px;width:21px;height:21px;"><div class="t" style="top:3px;left:-289.5px;width:600px;text-align:center;transform-origin:50% 0;transform:scaleX(0.885);">?</div></div>
<div class="t" style="top:611px;left:401px;width:600px;text-align:right;transform-origin:100% 0;transform:scaleX(0.885);">Tol MA</div>
<div class="e" style="left:1008px;top:607px;width:53px;height:21px;"><div class="t" style="top:3px;left:3px;transform-origin:0 0;transform:scaleX(0.885);color:#808080;">23,07692</div></div>
<div class="t" style="top:611px;left:1068px;transform-origin:0 0;transform:scaleX(0.885);">%</div>
<div class="t" style="top:635px;left:401px;width:600px;text-align:right;transform-origin:100% 0;transform:scaleX(0.885);">MA,min</div>
<div class="e" style="left:1008px;top:631px;width:53px;height:21px;"><div class="t" style="top:3px;left:3px;transform-origin:0 0;transform:scaleX(0.885);color:#808080;">325,5235</div></div>
<div class="t" style="top:635px;left:1068px;transform-origin:0 0;transform:scaleX(0.885);">Nm</div>
<div class="t" style="top:659px;left:401px;width:600px;text-align:right;transform-origin:100% 0;transform:scaleX(0.885);">FM,min</div>
<div class="e" style="left:1008px;top:655px;width:53px;height:21px;"><div class="t" style="top:3px;left:3px;transform-origin:0 0;transform:scaleX(0.885);color:#808080;">87822,2</div></div>
<div class="t" style="top:659px;left:1068px;transform-origin:0 0;transform:scaleX(0.885);">N</div>
<div class="t" style="top:571px;left:1132px;transform-origin:0 0;transform:scaleX(0.885);">µG = 0,12 ± 0%</div>
<div class="t" style="top:591px;left:1132px;transform-origin:0 0;transform:scaleX(0.885);">µK = 0,1 ± 0%</div>
<div class="t" style="top:631px;left:1132px;transform-origin:0 0;transform:scaleX(0.885);">FM = 114169 ± 23,08 %</div>
<div class="t" style="top:651px;left:1132px;transform-origin:0 0;transform:scaleX(0.885);">alpha = 18,38 ± 23,08 %</div>
<div class="t" style="top:699px;left:383px;width:600px;text-align:right;transform-origin:100% 0;transform:scaleX(0.915);">Anziehverfahren</div>
<div class="e" style="left:988px;top:695px;width:253px;height:21px;"></div>
<div class="t" style="top:723px;left:382px;width:600px;text-align:right;transform-origin:100% 0;transform:scaleX(0.885);">Einstellverfahren</div>
<div class="e" style="left:988px;top:719px;width:253px;height:21px;"></div>
<div class="t" style="top:747px;left:410px;width:600px;text-align:right;transform-origin:100% 0;transform:scaleX(0.92);">Reduktionskoeffizient k tau</div>
<div class="e" style="left:1016px;top:743px;width:41px;height:21px;"><div class="t" style="top:3px;left:3px;transform-origin:0 0;transform:scaleX(0.885);">0,5</div></div>
<div class="b" style="left:1064px;top:743px;width:21px;height:21px;"><svg style="position:absolute;left:8px;top:7px" width="4" height="7" shape-rendering="crispEdges"><rect x="3" y="0" width="1" height="1"/><rect x="2" y="1" width="1" height="1"/><rect x="1" y="2" width="1" height="1"/><rect x="0" y="3" width="1" height="1"/><rect x="1" y="4" width="1" height="1"/><rect x="2" y="5" width="1" height="1"/><rect x="3" y="6" width="1" height="1"/></svg></div>
<div class="b" style="left:1244px;top:695px;width:17px;height:65px;"><svg style="position:absolute;left:6px;top:29px" width="4" height="7" shape-rendering="crispEdges"><rect x="3" y="0" width="1" height="1"/><rect x="2" y="1" width="1" height="1"/><rect x="1" y="2" width="1" height="1"/><rect x="0" y="3" width="1" height="1"/><rect x="1" y="4" width="1" height="1"/><rect x="2" y="5" width="1" height="1"/><rect x="3" y="6" width="1" height="1"/></svg></div>
<div class="b" style="left:700px;top:835px;width:75px;height:25px;"><div class="t" style="top:5px;left:-262.5px;width:600px;text-align:center;transform-origin:50% 0;transform:scaleX(0.885);">OK</div></div>
<div class="b" style="left:784px;top:835px;width:75px;height:25px;"><div class="t" style="top:5px;left:-262.5px;width:600px;text-align:center;transform-origin:50% 0;transform:scaleX(0.885);">Abbrechen</div></div>
<div class="b" style="left:872px;top:835px;width:75px;height:25px;"><div class="t" style="top:5px;left:-262.5px;width:600px;text-align:center;transform-origin:50% 0;transform:scaleX(0.885);">Hilfetext</div></div>
<div class="b" style="left:952px;top:835px;width:75px;height:25px;"><div class="t" style="top:5px;left:-262.5px;width:600px;text-align:center;transform-origin:50% 0;transform:scaleX(0.885);">Hilfebild</div></div>
<div class="b" style="left:1036px;top:835px;width:75px;height:25px;"><div class="t" style="top:5px;left:-262.5px;width:600px;text-align:center;transform-origin:50% 0;transform:scaleX(0.885);">mm &lt;--&gt; inch</div></div>
<div class="b" style="left:1184px;top:835px;width:75px;height:25px;"><div class="t" style="top:5px;left:-262.5px;width:600px;text-align:center;transform-origin:50% 0;transform:scaleX(0.885);">Calc</div></div></body></html>
